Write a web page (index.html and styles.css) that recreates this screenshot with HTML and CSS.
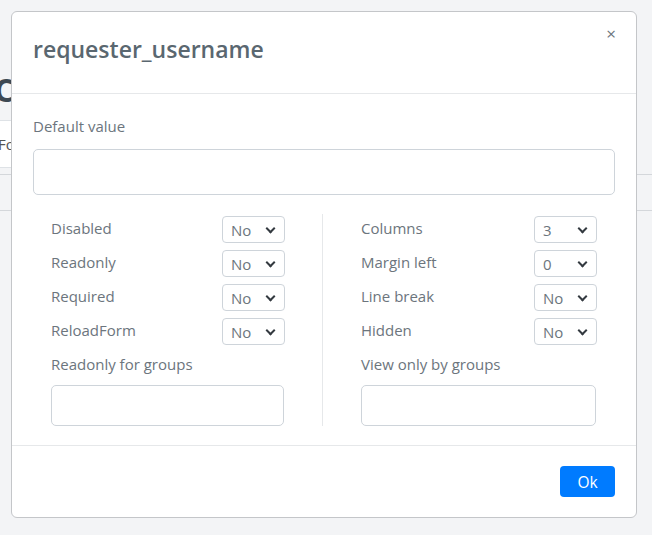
FILE: index.html
```html
<!DOCTYPE html>
<html lang="en">
<head>
  <meta charset="UTF-8">
  <title>requester_username</title>
  <link rel="stylesheet" href="styles.css">
</head>
<body>
  <div class="page">
    <h1 class="page-title">Campos</h1>
    <div class="tabs">
      <div class="tab">Formulario</div>
    </div>
    <div class="rule"></div>
    <div class="rule second"></div>
  </div>

  <div class="modal">
    <div class="modal-header">
      <h2>requester_username</h2>
      <span class="close">&times;</span>
    </div>

    <div class="modal-body">
      <label class="field-label">Default value</label>
      <div class="input wide"></div>

      <div class="cols">
        <div class="col left">
          <div class="row"><span>Disabled</span><div class="select">No</div></div>
          <div class="row"><span>Readonly</span><div class="select">No</div></div>
          <div class="row"><span>Required</span><div class="select">No</div></div>
          <div class="row"><span>ReloadForm</span><div class="select">No</div></div>
          <label class="field-label group">Readonly for groups</label>
          <div class="input small"></div>
        </div>
        <div class="col right">
          <div class="row"><span>Columns</span><div class="select">3</div></div>
          <div class="row"><span>Margin left</span><div class="select">0</div></div>
          <div class="row"><span>Line break</span><div class="select">No</div></div>
          <div class="row"><span>Hidden</span><div class="select">No</div></div>
          <label class="field-label group">View only by groups</label>
          <div class="input small"></div>
        </div>
      </div>
    </div>

    <div class="modal-footer">
      <button class="btn">Ok</button>
    </div>
  </div>
</body>
</html>
```

FILE: styles.css
```css
body { margin: 0; font-family: "Open Sans", "Noto Sans", sans-serif; background: #f3f4f6; color: #6c757d; width: 652px; height: 535px; overflow: hidden; position: relative; }

.page { padding-top: 70px; margin-left: -6px; }
.page-title { margin: 0; font-size: 32px; font-weight: 700; color: #3d4852; line-height: 40px; }
.tabs { margin-top: 10px; height: 48px; }
.tab { display: inline-block; height: 46px; line-height: 46px; padding: 0 10px 0 4px; background: #fff; border: 1px solid #dee2e6; border-left: none; font-size: 15px; color: #555; }
.rule { height: 1px; background: #d4d7db; margin-top: 6px; width: 700px; }
.rule.second { margin-top: 35px; }

.modal {
  position: absolute;
  left: 11px; top: 11px;
  width: 624px; height: 505px;
  background: #fff;
  border: 1px solid #c4c6c9;
  border-radius: 6px;
  display: flex;
  flex-direction: column;
}
.modal-header {
  height: 81px;
  border-bottom: 1px solid #e6e8ea;
  padding: 0 21px;
  position: relative;
}
.modal-header h2 { margin: 0; padding-top: 20px; font-size: 23px; font-weight: 600; color: #5a6770; line-height: 34px; }
.close { position: absolute; right: 20px; top: 10px; font-size: 17px; color: #6c757d; }

.modal-body { flex: 1; padding: 22px 21px 0; }
.field-label { display: block; font-size: 15px; line-height: 20px; color: #6c757d; }
.input { border: 1px solid #ced4da; border-radius: 5px; background: #fff; box-sizing: border-box; }
.input.wide { margin-top: 13px; height: 46px; }
.input.small { height: 41px; }

.cols { display: grid; grid-template-columns: 290px 291px; margin-top: 19px; }
.col { display: flex; flex-direction: column; gap: 7px; }
.col.left { padding: 2px 38px 0 18px; border-right: 1px solid #e6e8ea; }
.col.right { padding: 2px 18px 0 38px; }
.col .group { margin-top: 2px; }
.col .input.small { margin-top: 4px; }

.row { display: flex; justify-content: space-between; align-items: center; font-size: 15px; height: 27px; }
.row span { margin-top: -3px; }
.select {
  width: 63px; height: 27px; box-sizing: border-box;
  border: 1px solid #ced4da; border-radius: 4px;
  padding: 3px 0 0 8px; font-size: 15px; color: #6c757d;
  position: relative;
  margin-right: -1px;
}
.select::after {
  content: "";
  position: absolute; right: 10px; top: 8px;
  width: 5px; height: 5px;
  border-right: 2px solid #343a40; border-bottom: 2px solid #343a40;
  transform: rotate(45deg);
}

.modal-footer { height: 71px; border-top: 1px solid #e6e8ea; display: flex; justify-content: flex-end; align-items: center; padding: 0 21px; }
.btn { width: 55px; height: 31px; border: none; border-radius: 4px; background: #007bff; color: #fff; font-family: inherit; font-size: 15.5px; }
```
